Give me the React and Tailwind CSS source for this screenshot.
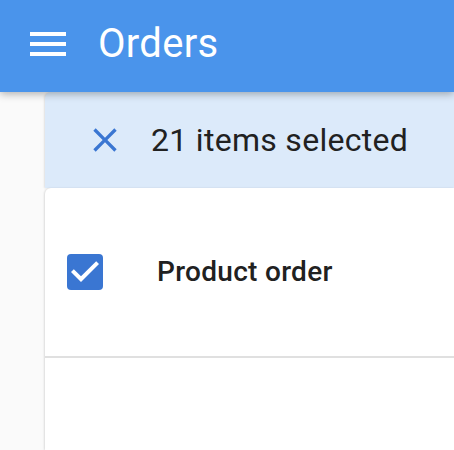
import React from 'react';

function MenuIcon() {
  return (
    <svg width="48" height="48" viewBox="0 0 24 24" fill="#ffffff">
      <path d="M3 18h18v-2H3v2zm0-5h18v-2H3v2zm0-7v2h18V6H3z" />
    </svg>
  );
}

function CloseIcon() {
  return (
    <svg width="40" height="40" viewBox="0 0 24 24" fill="#3a76d2">
      <path d="M19 6.41L17.59 5 12 10.59 6.41 5 5 6.41 10.59 12 5 17.59 6.41 19 12 13.41 17.59 19 19 17.59 13.41 12z" />
    </svg>
  );
}

function CheckedBox() {
  return (
    <svg width="48" height="48" viewBox="0 0 24 24">
      <rect x="3" y="3" width="18" height="18" rx="2" fill="#3a76d2" />
      <path d="M10 17l-5-5 1.41-1.41L10 14.17l7.59-7.59L19 8l-9 9z" fill="#ffffff" />
    </svg>
  );
}

export default function App() {
  return (
    <div
      className="w-[454px] h-[450px] bg-[#fafafa] overflow-hidden flex flex-col"
      style={{ fontFamily: 'Roboto, "Liberation Sans", sans-serif' }}
    >
      <header className="relative z-10 h-[92px] shrink-0 bg-[#4a94eb] flex items-center pb-1 pl-6 gap-[26px] shadow-[0_2px_8px_rgba(0,0,0,0.3)]">
        <MenuIcon />
        <h1 className="text-[40px] leading-none tracking-[0.3px] text-white font-normal">Orders</h1>
      </header>

      <main className="flex-1 flex flex-col pl-[45px]">
        <div className="h-[96px] shrink-0 bg-[#dceafa] rounded-tl-md flex items-center pl-10 gap-[26px] shadow-[-1px_0_2px_rgba(0,0,0,0.1)]">
          <CloseIcon />
          <span className="text-[32px] leading-none tracking-[0.3px] text-[#212121]">21 items selected</span>
        </div>

        <section className="flex-1 bg-white rounded-tl-md shadow-[-1px_0_2px_rgba(0,0,0,0.12)]">
          <div className="h-[170px] flex items-center pl-4 gap-12 border-b-2 border-[#e0e0e0]">
            <CheckedBox />
            <span className="text-[28px] leading-none tracking-[0.3px] font-medium text-[#212121]">Product order</span>
          </div>
        </section>
      </main>
    </div>
  );
}
